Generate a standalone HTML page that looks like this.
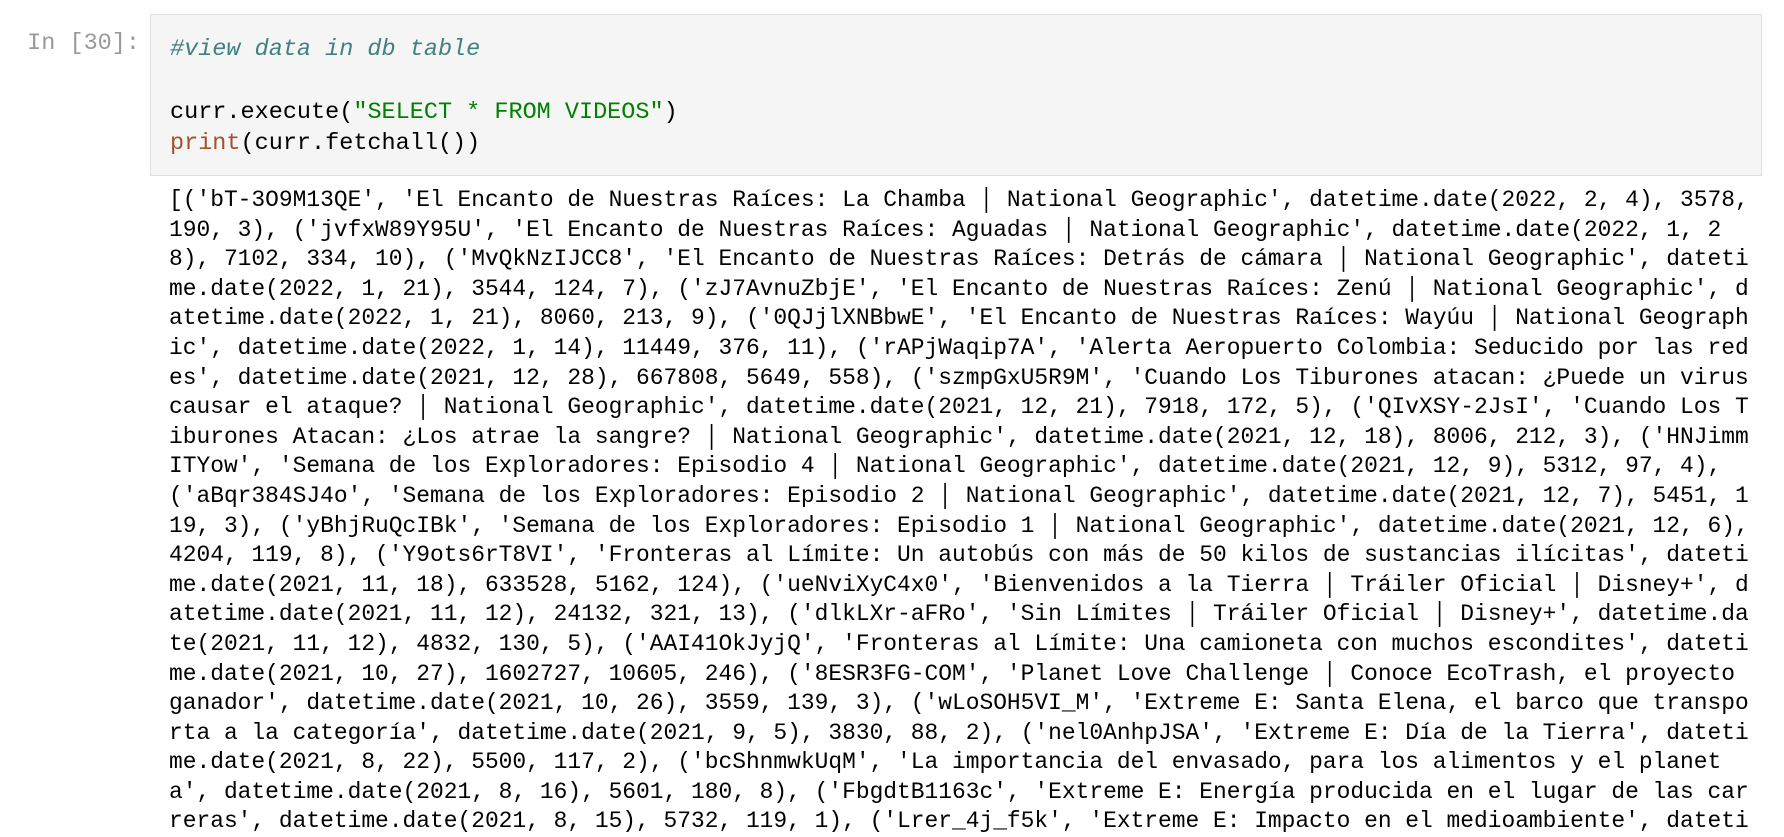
<!DOCTYPE html>
<html><head><meta charset="utf-8"><style>
body{margin:0;background:#fff;width:1784px;height:830px;overflow:hidden;position:relative;font-family:"Liberation Mono","DejaVu Sans Mono",monospace;font-size:23.5px;}
.prompt{position:absolute;left:24px;top:30px;width:116px;text-align:right;color:#999;line-height:28px;white-space:pre;}
.box{position:absolute;left:150px;top:14px;width:1610px;height:160px;background:#f5f5f5;border:1px solid #e0e0e0;}
.code{position:absolute;left:170px;top:34px;line-height:31.3px;white-space:pre;color:#000;}
.c{color:#408080;font-style:italic}
.s{color:#008000}
.b{color:#a0522d}
.out{position:absolute;left:169px;top:186px;line-height:29.6px;font-size:22.9px;white-space:pre;color:#000;}
</style></head><body>
<div class="prompt">In [30]:</div>
<div class="box"></div>
<div class="code"><span class="c">#view data in db table</span>

curr.execute(<span class="s">"SELECT * FROM VIDEOS"</span>)
<span class="b">print</span>(curr.fetchall())</div>
<div class="out">[('bT-3O9M13QE', 'El Encanto de Nuestras Raíces: La Chamba │ National Geographic', datetime.date(2022, 2, 4), 3578,
190, 3), ('jvfxW89Y95U', 'El Encanto de Nuestras Raíces: Aguadas │ National Geographic', datetime.date(2022, 1, 2
8), 7102, 334, 10), ('MvQkNzIJCC8', 'El Encanto de Nuestras Raíces: Detrás de cámara │ National Geographic', dateti
me.date(2022, 1, 21), 3544, 124, 7), ('zJ7AvnuZbjE', 'El Encanto de Nuestras Raíces: Zenú │ National Geographic', d
atetime.date(2022, 1, 21), 8060, 213, 9), ('0QJjlXNBbwE', 'El Encanto de Nuestras Raíces: Wayúu │ National Geograph
ic', datetime.date(2022, 1, 14), 11449, 376, 11), ('rAPjWaqip7A', 'Alerta Aeropuerto Colombia: Seducido por las red
es', datetime.date(2021, 12, 28), 667808, 5649, 558), ('szmpGxU5R9M', 'Cuando Los Tiburones atacan: ¿Puede un virus
causar el ataque? │ National Geographic', datetime.date(2021, 12, 21), 7918, 172, 5), ('QIvXSY-2JsI', 'Cuando Los T
iburones Atacan: ¿Los atrae la sangre? │ National Geographic', datetime.date(2021, 12, 18), 8006, 212, 3), ('HNJimm
ITYow', 'Semana de los Exploradores: Episodio 4 │ National Geographic', datetime.date(2021, 12, 9), 5312, 97, 4),
('aBqr384SJ4o', 'Semana de los Exploradores: Episodio 2 │ National Geographic', datetime.date(2021, 12, 7), 5451, 1
19, 3), ('yBhjRuQcIBk', 'Semana de los Exploradores: Episodio 1 │ National Geographic', datetime.date(2021, 12, 6),
4204, 119, 8), ('Y9ots6rT8VI', 'Fronteras al Límite: Un autobús con más de 50 kilos de sustancias ilícitas', dateti
me.date(2021, 11, 18), 633528, 5162, 124), ('ueNviXyC4x0', 'Bienvenidos a la Tierra │ Tráiler Oficial │ Disney+', d
atetime.date(2021, 11, 12), 24132, 321, 13), ('dlkLXr-aFRo', 'Sin Límites │ Tráiler Oficial │ Disney+', datetime.da
te(2021, 11, 12), 4832, 130, 5), ('AAI41OkJyjQ', 'Fronteras al Límite: Una camioneta con muchos escondites', dateti
me.date(2021, 10, 27), 1602727, 10605, 246), ('8ESR3FG-COM', 'Planet Love Challenge │ Conoce EcoTrash, el proyecto
ganador', datetime.date(2021, 10, 26), 3559, 139, 3), ('wLoSOH5VI_M', 'Extreme E: Santa Elena, el barco que transpo
rta a la categoría', datetime.date(2021, 9, 5), 3830, 88, 2), ('nel0AnhpJSA', 'Extreme E: Día de la Tierra', dateti
me.date(2021, 8, 22), 5500, 117, 2), ('bcShnmwkUqM', 'La importancia del envasado, para los alimentos y el planet
a', datetime.date(2021, 8, 16), 5601, 180, 8), ('FbgdtB1163c', 'Extreme E: Energía producida en el lugar de las car
reras', datetime.date(2021, 8, 15), 5732, 119, 1), ('Lrer_4j_f5k', 'Extreme E: Impacto en el medioambiente', dateti</div>
</body></html>
